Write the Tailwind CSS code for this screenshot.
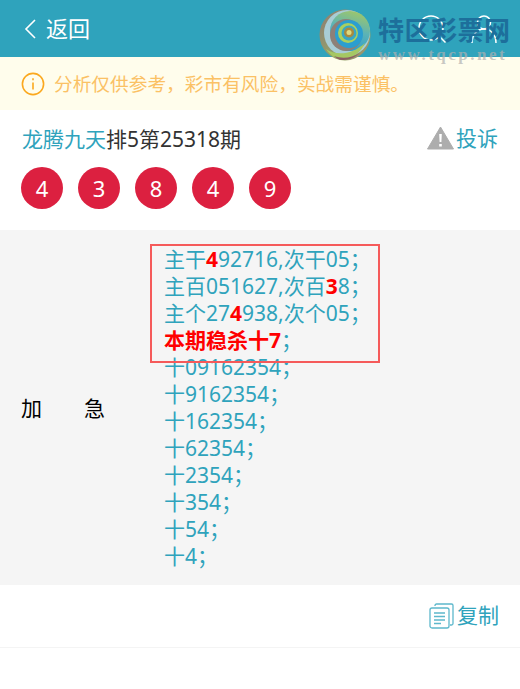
<!DOCTYPE html>
<html>
<head>
  <meta charset="utf-8">
  <title>详情</title>
  <script src="https://cdn.jsdelivr.net/npm/@tailwindcss/browser@4"></script>
</head>
<body class="bg-white font-['Noto_Sans','Noto_Sans_CJK_SC',sans-serif] text-[21px] overflow-hidden">
  <div class="relative h-[689px] w-[520px]">
    <header class="h-[57px] bg-[#2fa3bc] flex items-center pl-[24px] text-white">
      <svg class="w-[12px] h-[22px] mr-[10px]" viewBox="0 0 12 22" fill="none" stroke="white" stroke-width="1.6"><path d="M11 2 2 11l9 9"/></svg>
      <span class="text-[22px] leading-none -mt-[1px]">返回</span>
      <div class="ml-auto flex items-center gap-[24px] pr-[22px]">
        <svg class="w-[28px] h-[28px]" viewBox="0 0 28 28" fill="none" stroke="white" stroke-width="1.5"><circle cx="13" cy="13" r="12"/><path d="m21.500 21.500 6 6"/></svg>
        <svg class="w-[28px] h-[28px]" viewBox="0 0 28 28" fill="none" stroke="white" stroke-width="1.5"><circle cx="14" cy="7.500" r="6.500"/><path d="M2 28c0-8 5-14 12-14s12 6 12 14"/></svg>
      </div>
    </header>

    <div class="h-[53px] bg-[#fffdec] flex items-center pl-[21px] text-[#fbc165] text-[18.7px]">
      <svg class="w-[24px] h-[24px] mr-[9px] shrink-0" viewBox="0 0 24 24" fill="none" stroke="#fba81e" stroke-width="1.6"><circle cx="12" cy="12" r="10.600"/><path d="M12 10.500v7"/><path d="M12 6.200v2"/></svg>
      <span class="mt-[1px]">分析仅供参考，彩市有风险，实战需谨慎。</span>
    </div>

    <section class="h-[120px] px-[22px] pt-[15px]">
      <div class="flex items-center justify-between h-[28px]">
        <div class="leading-[28px] text-[#333]"><span class="text-[#2fa3bc]">龙腾九天</span>排5第25318期</div>
        <div class="flex items-center text-[#2fa3bc]">
          <svg class="w-[27px] h-[24px] mr-[2px] -mt-[2px]" viewBox="0 0 27 24"><path d="M13.500 1 26.500 23h-26z" fill="#adadad" stroke="#adadad" stroke-linejoin="round"/><path d="M12.200 8h2.600l-.4 8h-1.800zM12.200 18h2.600v2.400h-2.600z" fill="white"/></svg>
          <span>投诉</span>
        </div>
      </div>
      <div class="flex gap-[15px] mt-[14px] -ml-[1px]">
        <span class="w-[42px] h-[42px] rounded-full bg-[#dc2040] text-white flex items-center justify-center text-[22px]">4</span>
        <span class="w-[42px] h-[42px] rounded-full bg-[#dc2040] text-white flex items-center justify-center text-[22px]">3</span>
        <span class="w-[42px] h-[42px] rounded-full bg-[#dc2040] text-white flex items-center justify-center text-[22px]">8</span>
        <span class="w-[42px] h-[42px] rounded-full bg-[#dc2040] text-white flex items-center justify-center text-[22px]">4</span>
        <span class="w-[42px] h-[42px] rounded-full bg-[#dc2040] text-white flex items-center justify-center text-[22px]">9</span>
      </div>
    </section>

    <section class="h-[355px] bg-[#f5f5f5] flex items-center">
      <div class="w-[165px] pl-[21px] flex text-black gap-[42px] shrink-0 mt-[2px] -mr-[1px]"><span>加</span><span>急</span></div>
      <div class="text-[#2fa3bc] leading-[27px] relative">
        <div class="absolute left-[-14px] top-[-2px] w-[230px] h-[119px] border-2 border-[#f55a5a]"></div>
        <p>主干<b class="text-[#ff0000]">4</b>92716,次干05；</p>
        <p>主百051627,次百<b class="text-[#ff0000]">3</b>8；</p>
        <p>主个27<b class="text-[#ff0000]">4</b>938,次个05；</p>
        <p><b class="text-[#ff0000]">本期稳杀十7</b>；</p>
        <p>十09162354；</p>
        <p>十9162354；</p>
        <p>十162354；</p>
        <p>十62354；</p>
        <p>十2354；</p>
        <p>十354；</p>
        <p>十54；</p>
        <p>十4；</p>
      </div>
    </section>

    <div class="h-[63px] border-b border-[#f4f4f4] flex items-center justify-end pr-[21px] text-[#2fa3bc]">
      <svg class="w-[25px] h-[26px] mr-[3px]" viewBox="0 0 25 26" fill="none" stroke="#5db8cc" stroke-width="1.3"><path d="M6 3V2.500A1.500 1.500 0 0 1 7.500 1h15A1.500 1.500 0 0 1 24 2.500v18a1.500 1.500 0 0 1-1.500 1.500H21"/><rect x="1" y="5" width="19" height="20" rx="2"/><path d="M5 10h11M5 13.500h11M5 17h11M5 20.500h7" stroke-width="1.500"/></svg>
      <span>复制</span>
    </div>

    <!-- watermark logo over the header -->
    <div class="absolute left-[319px] top-[9px] flex pointer-events-none">
      <svg class="w-[52px] h-[52px]" viewBox="0 0 52 52">
        <defs>
          <linearGradient id="ring" x1="0.8" y1="0" x2="0.5" y2="1">
            <stop offset="0" stop-color="#a5c863"/>
            <stop offset="0.5" stop-color="#5cb3b5"/>
            <stop offset="1" stop-color="#2b9ed0"/>
          </linearGradient>
          <linearGradient id="rim" x1="0" y1="0" x2="1" y2="1">
            <stop offset="0" stop-color="#8f7c72"/>
            <stop offset="0.7" stop-color="#93a86a"/>
            <stop offset="1" stop-color="#a08070"/>
          </linearGradient>
        </defs>
        <circle cx="26" cy="26" r="25.500" fill="url(#rim)"/>
        <circle cx="28" cy="24" r="23" fill="#a9cdd6"/>
        <circle cx="31" cy="22" r="20" fill="url(#ring)"/>
        <circle cx="27" cy="26" r="16" fill="#8d8078"/>
        <circle cx="30" cy="25" r="14" fill="#2b9ed0"/>
        <circle cx="29" cy="24" r="10" fill="#a9d05f"/>
        <circle cx="30" cy="24" r="7.500" fill="#38a7c4"/>
        <circle cx="30" cy="23.500" r="5" fill="#a98a3d"/>
        <circle cx="30" cy="23.500" r="2.500" fill="#dcd981"/>
        <path d="M7 40c10 7 26 6 39-6-4 10-14 16-23 16-7 0-12-4-16-10z" fill="#a5c863"/>
        <path d="M15 47c8 3 18 2 26-3-6 5-12 7.500-18 7-3 0-6-2-8-4z" fill="#8c5f63"/>
      </svg>
      <div class="ml-[7px] mt-[6px]">
        <div class="text-[#1d6f9b] font-bold text-[26px] leading-[30px] tracking-[0.5px] whitespace-nowrap">特区彩票网</div>
        <div class="font-['Liberation_Serif',serif] text-[#b0b0b0]/70 font-bold text-[17px] leading-[18px] tracking-[2.5px] mt-[1px] whitespace-nowrap">www.tqcp.net</div>
      </div>
    </div>
  </div>
</body>
</html>
